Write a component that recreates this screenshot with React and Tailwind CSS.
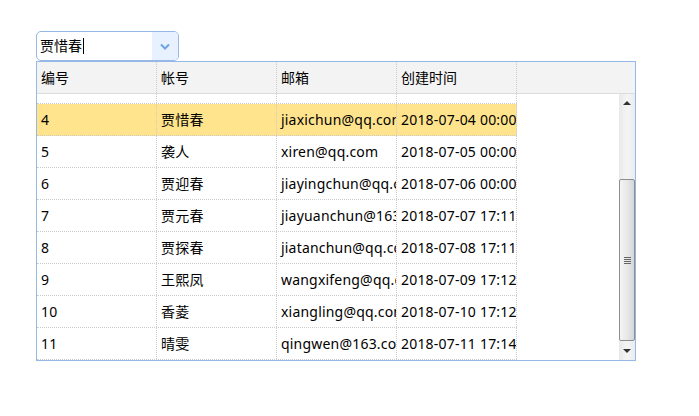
import React from "react";

const rows = [
  ["4", "贾惜春", "jiaxichun@qq.com", "2018-07-04 00:00:00"],
  ["5", "袭人", "xiren@qq.com", "2018-07-05 00:00:00"],
  ["6", "贾迎春", "jiayingchun@qq.com", "2018-07-06 00:00:00"],
  ["7", "贾元春", "jiayuanchun@163.com", "2018-07-07 17:11:20"],
  ["8", "贾探春", "jiatanchun@qq.com", "2018-07-08 17:11:45"],
  ["9", "王熙凤", "wangxifeng@qq.com", "2018-07-09 17:12:03"],
  ["10", "香菱", "xiangling@qq.com", "2018-07-10 17:12:30"],
  ["11", "晴雯", "qingwen@163.com", "2018-07-11 17:14:10"],
];

const font = { fontFamily: '"Noto Sans", "Noto Sans CJK SC", sans-serif' };

function Cell({ children }) {
  return (
    <div className="w-[120px] shrink-0 border-r border-dotted border-[#ccc] pl-[4px] overflow-hidden whitespace-nowrap flex items-center">
      {children}
    </div>
  );
}

export default function App() {
  return (
    <div className="w-[699px] h-[416px] bg-white pt-[31px] pl-[36px] text-[14px] text-black" style={font}>
      <div className="w-[143px] h-[30px] border border-[#95b8e7] rounded-[5px] flex overflow-hidden bg-white">
        <div className="flex-1 flex items-center pl-[3px]">
          <span className="leading-none">贾惜春</span>
          <span className="w-px h-[16px] bg-black ml-[1px]" />
        </div>
        <div className="w-[26px] bg-[#e8f1ff] flex items-center justify-center">
          <svg width="10" height="7" viewBox="0 0 10 7">
            <path d="M1 1.5 L5 5.5 L9 1.5" fill="none" stroke="#6ea3e4" strokeWidth="2" />
          </svg>
        </div>
      </div>
      <div className="w-[600px] h-[300px] border border-[#95b8e7] flex flex-col">
        <div className="h-[32px] shrink-0 bg-[#f3f3f3] border-b border-[#dcdcdc] flex">
          <Cell>编号</Cell>
          <Cell>帐号</Cell>
          <Cell>邮箱</Cell>
          <Cell>创建时间</Cell>
        </div>
        <div className="flex-1 flex min-h-0">
          <div className="flex-1 overflow-hidden tracking-[0.2px]">
            <div className="h-[10px] flex w-[480px] border-b border-dotted border-[#ccc]">
              <Cell />
              <Cell />
              <Cell />
              <Cell />
            </div>
            {rows.map((r) => (
              <div
                key={r[0]}
                className={`h-[32px] flex w-[480px] border-b border-dotted border-[#ccc] ${r[0] === "4" ? "bg-[#ffe48d]" : ""}`}
              >
                <Cell>{r[0]}</Cell>
                <Cell>{r[1]}</Cell>
                <Cell>{r[2]}</Cell>
                <Cell>{r[3]}</Cell>
              </div>
            ))}
          </div>
          <div className="w-[16px] shrink-0 flex flex-col bg-gradient-to-r from-[#e9e9e9] via-[#f4f4f4] to-[#ececec]">
            <div className="h-[17px] flex items-center justify-center">
              <svg width="8" height="5" viewBox="0 0 8 5">
                <path d="M0 5 L4 1 L8 5 Z" fill="#333" />
              </svg>
            </div>
            <div className="flex-1 flex flex-col pt-[68px] pb-[2px]">
              <div className="flex-1 border border-[#8e8e8e] rounded-[2px] bg-gradient-to-r from-[#f4f4f4] via-[#e8e8e8] to-[#d6d6d6] flex items-center justify-center">
                <div className="flex flex-col gap-[1px]">
                  <div className="w-[7px] h-px bg-[#666]" />
                  <div className="w-[7px] h-px bg-[#666]" />
                  <div className="w-[7px] h-px bg-[#666]" />
                  <div className="w-[7px] h-px bg-[#666]" />
                </div>
              </div>
            </div>
            <div className="h-[17px] flex items-center justify-center">
              <svg width="8" height="5" viewBox="0 0 8 5">
                <path d="M0 0 L4 4 L8 0 Z" fill="#333" />
              </svg>
            </div>
          </div>
        </div>
      </div>
    </div>
  );
}
